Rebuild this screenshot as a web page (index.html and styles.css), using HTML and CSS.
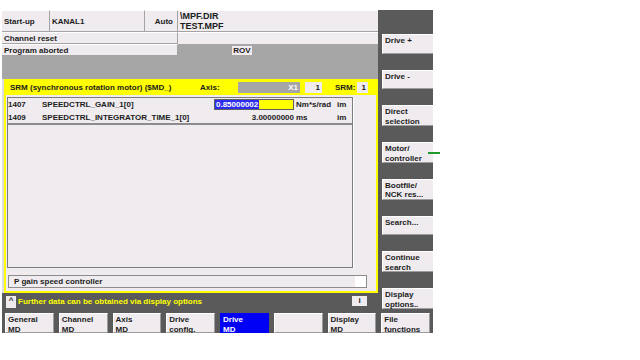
FILE: index.html
```html
<!DOCTYPE html>
<html lang="en">
<head>
    <meta charset="UTF-8">
    <title>Drive MD - SRM</title>
    <link rel="stylesheet" href="styles.css">
</head>
<body>
    <div class="screen">
        <div class="main">
            <div class="hdr">
                <div class="cell c-mode">Start-up</div>
                <div class="cell c-chan">KANAL1</div>
                <div class="cell c-auto">Auto</div>
                <div class="cell c-path">\MPF.DIR<br>TEST.MPF</div>
            </div>
            <div class="srow">
                <div class="cell c-msg">Channel reset</div>
                <div class="fill-pale"></div>
            </div>
            <div class="srow">
                <div class="cell c-msg">Program aborted</div>
                <div class="fill-gray"><span class="rov">ROV</span></div>
            </div>
            <div class="gray-gap"></div>

            <div class="panel">
                <div class="srm-bar">
                    <span class="srm-title">SRM (synchronous rotation motor) ($MD_)</span>
                    <span class="lbl-axis">Axis:</span>
                    <span class="box-axis">X1</span>
                    <span class="box-num">1</span>
                    <span class="lbl-srm">SRM:</span>
                    <span class="box-srm">1</span>
                </div>
                <div class="panel-body">
                    <div class="md-list">
                        <div class="md-rows">
                            <div class="md-row">
                                <span class="md-no">1407</span>
                                <span class="md-name">SPEEDCTRL_GAIN_1[0]</span>
                                <span class="md-val edit"><span class="sel">0.85000002</span></span>
                                <span class="md-unit">Nm*s/rad</span>
                                <span class="md-act">im</span>
                            </div>
                            <div class="md-row">
                                <span class="md-no">1409</span>
                                <span class="md-name">SPEEDCTRL_INTEGRATOR_TIME_1[0]</span>
                                <span class="md-val">3.00000000</span>
                                <span class="md-unit">ms</span>
                                <span class="md-act">im</span>
                            </div>
                        </div>
                    </div>
                    <div class="desc">P gain speed controller</div>
                </div>
            </div>

            <div class="hint">
                <span class="btn-up">^</span>
                <span class="hint-text">Further data can be obtained via display options</span>
                <span class="btn-info">i</span>
            </div>
        </div>

        <div class="vkeys">
            <div class="key">Drive +</div>
            <div class="key">Drive -</div>
            <div class="key">Direct<br>selection</div>
            <div class="key marked">Motor/<br>controller</div>
            <div class="key">Bootfile/<br>NCK res...</div>
            <div class="key">Search...</div>
            <div class="key">Continue<br>search</div>
            <div class="key">Display<br>options..</div>
        </div>

        <div class="hkeys">
            <div class="key">General<br>MD</div>
            <div class="key">Channel<br>MD</div>
            <div class="key">Axis<br>MD</div>
            <div class="key">Drive<br>config.</div>
            <div class="key active">Drive<br>MD</div>
            <div class="key"></div>
            <div class="key">Display<br>MD</div>
            <div class="key">File<br>functions</div>
        </div>
    </div>
</body>
</html>
```

FILE: styles.css
```css
body {
    margin: 0;
    background-color: #ffffff;
    font-family: "Liberation Sans", Arial, sans-serif;
    font-weight: bold;
    font-size: 8px;
    color: #1c1c1c;
}
.screen {
    display: grid;
    grid-template-columns: 376px 55px;
    grid-template-rows: 299px 24px;
    width: 431px;
    margin: 10px 0 0 2px;
    background-color: #5a5a5a;
}
.main {
    display: flex;
    flex-direction: column;
}

/* header */
.hdr {
    display: flex;
    height: 22px;
}
.cell {
    box-sizing: border-box;
    background-color: #efebef;
    border-right: 1px solid #a4a4a4;
    border-bottom: 1px solid #a4a4a4;
    border-top: 1px solid #ffffff;
    padding-left: 2px;
    display: flex;
    align-items: center;
}
.c-mode { width: 48px; }
.c-chan { width: 95px; }
.c-auto { width: 33px; justify-content: flex-end; padding-right: 4px; }
.c-path {
    width: 200px;
    border-right: none;
    font-size: 9px;
    line-height: 10px;
    align-items: flex-start;
    padding-top: 0;
}
.srow {
    display: flex;
    height: 12px;
}
.c-msg { width: 176px; }
.fill-pale {
    flex: 1;
    background-color: #f0ecf0;
    border-top: 1px solid #ffffff;
}
.fill-gray {
    flex: 1;
    background-color: #a6a6a6;
    padding-left: 54px;
    padding-top: 2px;
}
.rov {
    display: inline-block;
    width: 20px;
    height: 9px;
    line-height: 9px;
    text-align: center;
    background-color: #efebef;
}
.gray-gap {
    height: 23px;
    background-color: #a6a6a6;
}

/* work panel */
.panel {
    height: 214px;
    box-sizing: border-box;
    border-left: 2px solid #dedede;
    background-color: #ffff00;
    padding: 0 2px 2px 2px;
    display: flex;
    flex-direction: column;
}
.srm-bar {
    height: 16px;
    display: flex;
    align-items: center;
    padding-left: 4px;
}
.srm-title { width: 190px; }
.lbl-axis { width: 38px; }
.box-axis {
    width: 60px;
    height: 11px;
    line-height: 11px;
    background-color: #a6a6a6;
    color: #ffffff;
    text-align: right;
    padding-right: 2px;
}
.box-num, .box-srm {
    height: 11px;
    line-height: 11px;
    background-color: #f0ecf0;
    text-align: right;
    padding-right: 2px;
}
.box-num { width: 15px; margin-left: 5px; }
.lbl-srm { width: 22px; margin-left: 13px; }
.box-srm { width: 9px; }
.panel-body {
    flex: 1;
    background-color: #efebef;
    padding: 2px 0 3px 1px;
    display: flex;
    flex-direction: column;
}
.md-list {
    width: 346px;
    height: 171px;
    box-sizing: border-box;
    border: 1px solid #7c7c7c;
    box-shadow: 1px 0 0 #ffffff;
}
.md-rows {
    height: 25px;
    border-bottom: 2px solid #8c8c8c;
}
.md-row {
    display: flex;
    align-items: center;
    height: 13px;
}
.md-no { width: 34px; }
.md-name { width: 172px; }
.md-val {
    width: 80px;
    box-sizing: border-box;
    text-align: right;
}
.md-val.edit {
    height: 11px;
    background-color: #ffff00;
    border: 1px solid #606060;
    text-align: left;
    line-height: 9px;
}
.sel {
    background-color: #2d2df0;
    color: #ffffff;
    padding: 0 1px;
}
.md-unit { width: 43px; padding-left: 2px; box-sizing: border-box; }
.md-act { width: 13px; }
.desc {
    margin: 7px 0 0 1px;
    width: 359px;
    height: 13px;
    box-sizing: border-box;
    border: 1px solid #8c8c8c;
    background: linear-gradient(to right, #efebef 346px, #ffffff 346px);
    padding-left: 5px;
    line-height: 11px;
}

/* hint line */
.hint {
    height: 16px;
    display: flex;
    align-items: center;
    color: #ffff00;
}
.btn-up {
    width: 10px;
    height: 12px;
    margin: 2px 2px 0 4px;
    background-color: #efebef;
    color: #1c1c1c;
    text-align: center;
    line-height: 9px;
}
.btn-info {
    margin-left: auto;
    margin-right: 11px;
    width: 15px;
    height: 10px;
    line-height: 10px;
    text-align: center;
    background-color: #efebef;
    color: #1c1c1c;
}

/* softkeys */
.key {
    box-sizing: border-box;
    background-color: #efebef;
    border-top: 1px solid #ffffff;
    border-left: 1px solid #ffffff;
    border-bottom: 1px solid #9c9c9c;
    border-right: 1px solid #9c9c9c;
    padding: 1px 2px;
    line-height: 9.5px;
}
.vkeys {
    display: flex;
    flex-direction: column;
    gap: 15.8px;
    padding: 24px 0 0 4px;
}
.vkeys .key {
    height: 21px;
    border-right: none;
}
.key.marked {
    position: relative;
}
.key.marked::after {
    content: "";
    position: absolute;
    right: -7px;
    top: 9px;
    width: 12px;
    height: 2px;
    background-color: #1f9a2a;
}
.hkeys {
    grid-column: 1 / -1;
    display: grid;
    grid-template-columns: repeat(8, 1fr);
    gap: 5px;
    padding: 4px 3px 0 3px;
}
.hkeys .key {
    height: 20px;
}
.key.active {
    background-color: #0000f4;
    color: #ffffff;
    border-color: #0000f4;
}
```
